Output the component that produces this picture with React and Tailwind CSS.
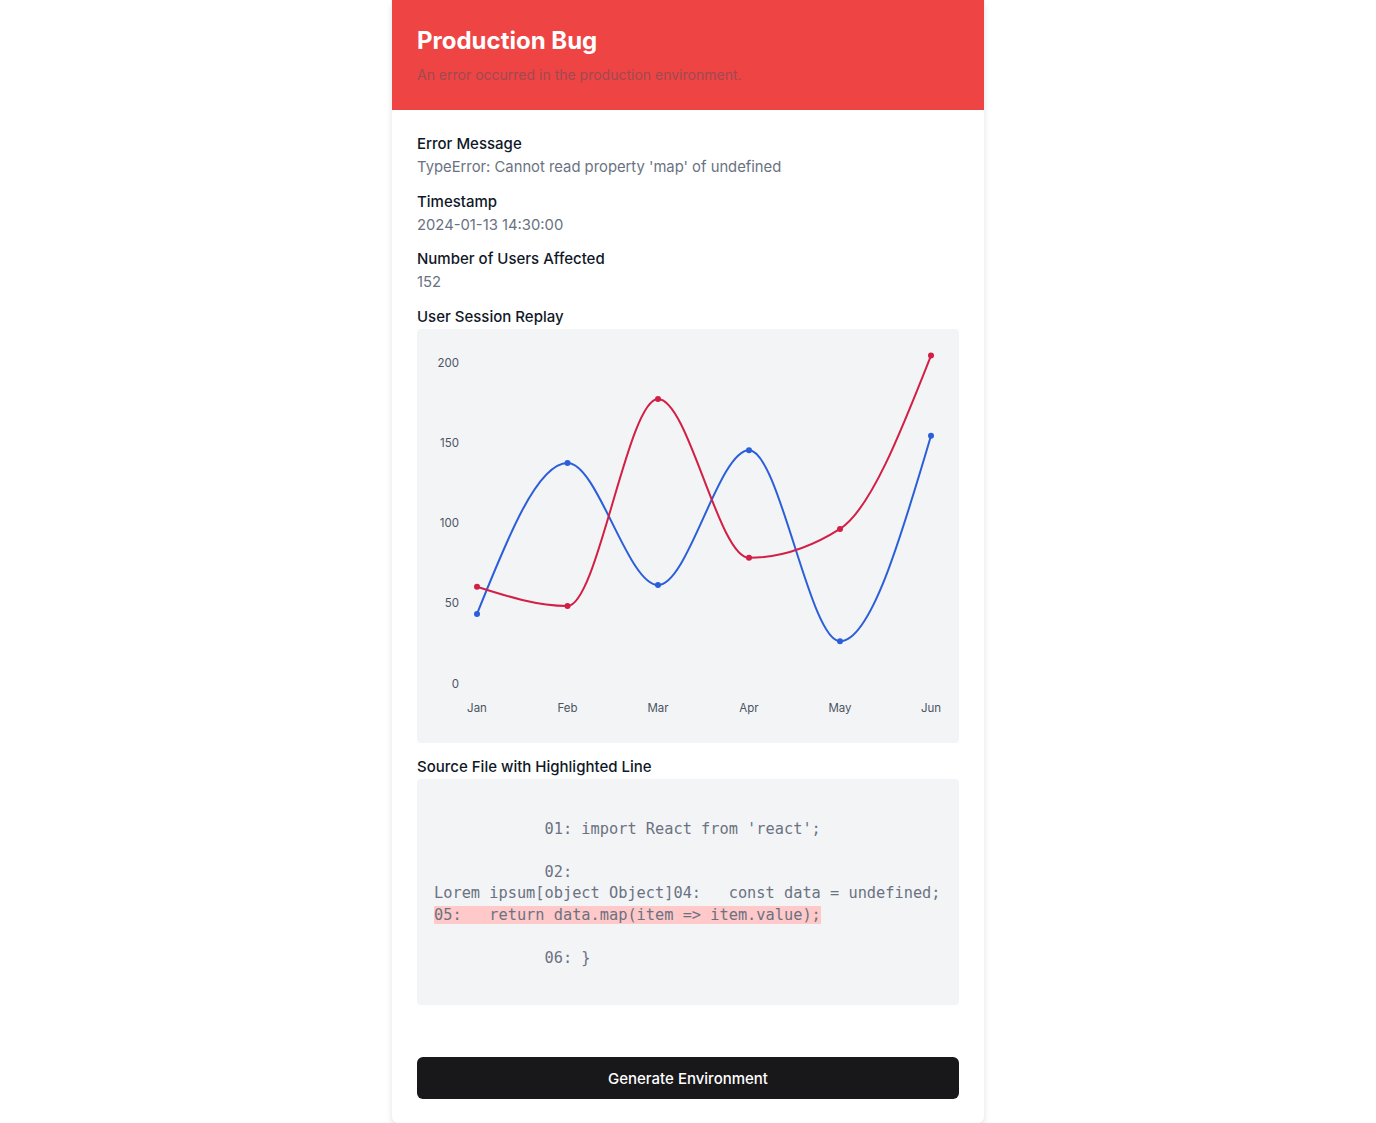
import React from 'react';

// chart coords are relative to the chart panel (542 x 414)
const xs = [60, 150.5, 241, 332, 423, 514];
const months = ['Jan', 'Feb', 'Mar', 'Apr', 'May', 'Jun'];
const yOf = (v) => 354 - v * 1.605;

const redData = [60, 48, 177, 78, 96, 204];
const blueData = [43, 137, 61, 145, 26, 154];

const sign = (n) => (n < 0 ? -1 : 1);

// same idea as d3 curveMonotoneX
function monotonePath(pts) {
  const n = pts.length;
  const t = new Array(n).fill(0);
  for (let i = 1; i < n - 1; i++) {
    const [x0, y0] = pts[i - 1];
    const [x1, y1] = pts[i];
    const [x2, y2] = pts[i + 1];
    const h0 = x1 - x0, h1 = x2 - x1;
    const s0 = (y1 - y0) / h0, s1 = (y2 - y1) / h1;
    const p = (s0 * h1 + s1 * h0) / (h0 + h1);
    t[i] = (sign(s0) + sign(s1)) * Math.min(Math.abs(s0), Math.abs(s1), 0.5 * Math.abs(p)) || 0;
  }
  const s2 = (a, b, tt) => (3 * (b[1] - a[1]) / (b[0] - a[0]) - tt) / 2;
  t[0] = s2(pts[0], pts[1], t[1]);
  t[n - 1] = s2(pts[n - 2], pts[n - 1], t[n - 2]);
  let d = `M${pts[0][0]},${pts[0][1]}`;
  for (let i = 0; i < n - 1; i++) {
    const [x0, y0] = pts[i];
    const [x1, y1] = pts[i + 1];
    const dx = (x1 - x0) / 3;
    d += ` C${x0 + dx},${y0 + dx * t[i]} ${x1 - dx},${y1 - dx * t[i + 1]} ${x1},${y1}`;
  }
  return d;
}

function SessionChart() {
  const red = redData.map((v, i) => [xs[i], yOf(v)]);
  const blue = blueData.map((v, i) => [xs[i], yOf(v)]);
  return (
    <svg width="542" height="414" viewBox="0 0 542 414" className="block">
      {[0, 50, 100, 150, 200].map((v) => (
        <text key={v} x="42" y={yOf(v) + 4.5} textAnchor="end" fontSize="11.5" fill="#4b5563" fontFamily="Inter, sans-serif">
          {v}
        </text>
      ))}
      {months.map((m, i) => (
        <text key={m} x={xs[i]} y="382.5" textAnchor="middle" fontSize="11.5" fill="#4b5563" fontFamily="Inter, sans-serif">
          {m}
        </text>
      ))}
      <path d={monotonePath(blue)} fill="none" stroke="#2b5fd9" strokeWidth="2" />
      <path d={monotonePath(red)} fill="none" stroke="#d21f45" strokeWidth="2" />
      {blue.map(([x, y], i) => <circle key={'b' + i} cx={x} cy={y} r="3" fill="#2b5fd9" />)}
      {red.map(([x, y], i) => <circle key={'r' + i} cx={x} cy={y} r="3" fill="#d21f45" />)}
    </svg>
  );
}

const code = `
            01: import React from 'react';

            02: 
Lorem ipsum[object Object]04:   const data = undefined;
`;

function Field({ label, value }) {
  return (
    <div>
      <div className="text-[15px] leading-[22px] font-medium text-gray-900">{label}</div>
      <div className="text-[14.8px] leading-[24px] text-gray-500">{value}</div>
    </div>
  );
}

export default function App() {
  return (
    <div className="min-h-screen bg-white font-['Inter',sans-serif]">
      <div className="w-[594px] mx-auto rounded-b-lg border border-t-0 border-gray-100 shadow-md overflow-hidden bg-white">
        <div className="bg-[#ef4444] px-[25px] pt-[25px] pb-[25px]">
          <h1 className="text-2xl font-bold text-white leading-8">Production Bug</h1>
          <p className="mt-2 text-sm leading-5 text-[#9e4a50]">An error occurred in the production environment.</p>
        </div>

        <div className="px-[25px] pt-[23px] pb-6">
          <div className="flex flex-col gap-[11.5px]">
            <Field label="Error Message" value="TypeError: Cannot read property 'map' of undefined" />
            <Field label="Timestamp" value="2024-01-13 14:30:00" />
            <Field label="Number of Users Affected" value="152" />
            <div>
              <div className="text-[15px] leading-[22px] font-medium text-gray-900">User Session Replay</div>
              <div className="mt-px bg-gray-100 rounded">
                <SessionChart />
              </div>
            </div>
            <div className="mt-[2px]">
              <div className="text-[15px] leading-[22px] font-medium text-gray-900">Source File with Highlighted Line</div>
              <div className="mt-px bg-gray-100 rounded pt-[18px] pb-[14px] px-[17px]">
                <pre className="font-['DejaVu_Sans_Mono',monospace] text-[15.3px] leading-[21.5px] text-gray-500 whitespace-pre">
                  {code}
                  <span className="bg-red-200">{'05:   return data.map(item => item.value);'}</span>
                  {`

            06: }
            `}
                </pre>
              </div>
            </div>
          </div>

          <button className="mt-[52px] w-full h-[42px] flex items-center justify-center rounded-md bg-[#18181b] text-white text-[15px] leading-[22px] pt-[3px] font-medium">
            Generate Environment
          </button>
        </div>
      </div>
    </div>
  );
}
